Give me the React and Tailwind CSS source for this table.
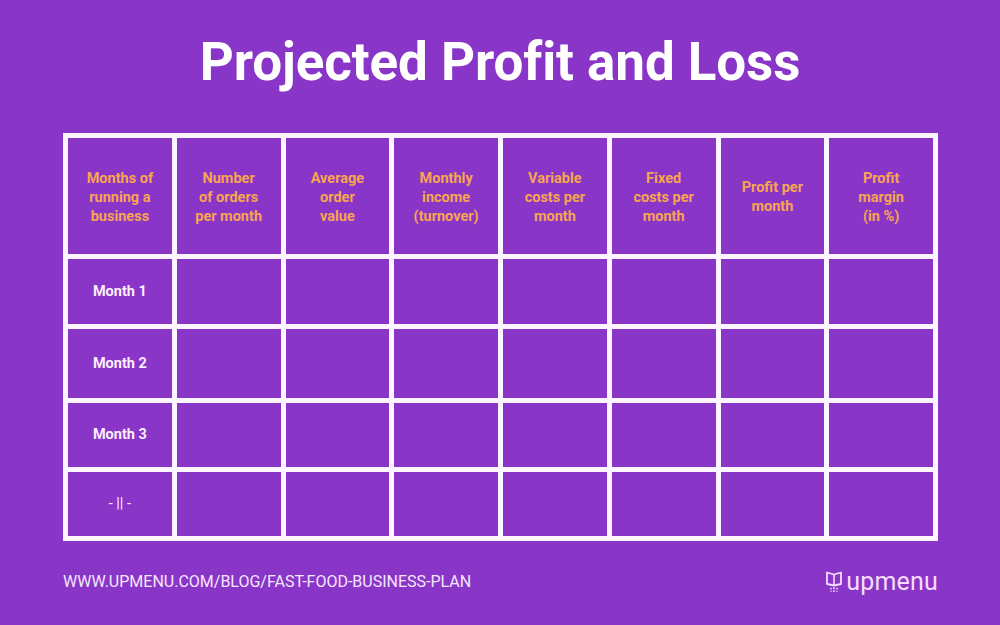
const headers = [
  ["Months of", "running a", "business"],
  ["Number", "of orders", "per month"],
  ["Average", "order", "value"],
  ["Monthly", "income", "(turnover)"],
  ["Variable", "costs per", "month"],
  ["Fixed", "costs per", "month"],
  ["Profit per", "month"],
  ["Profit", "margin", "(in %)"],
];

const rows = [
  { label: "Month 1", h: "h-[65px]" },
  { label: "Month 2", h: "h-[69px]" },
  { label: "Month 3", h: "h-[64px]" },
  { label: "- || -", h: "h-[64px]", thin: true },
];

function Logo() {
  return (
    <div className="flex items-center gap-[3px] text-[#f6dcff]">
      <svg width="18" height="23" viewBox="0 0 18 23" fill="none">
        <path
          d="M2 2.5 L9 4.5 L16 2.5 L16 14 L9 15.5 L2 14 Z"
          stroke="currentColor"
          strokeWidth="1.8"
          strokeLinejoin="round"
        />
        <path d="M9 4.5 V15.5" stroke="currentColor" strokeWidth="1.6" />
        <circle cx="9" cy="18.3" r="1" fill="currentColor" />
        <circle cx="6" cy="18.6" r="0.9" fill="currentColor" />
        <circle cx="12" cy="18.6" r="0.9" fill="currentColor" />
        <circle cx="9" cy="21.2" r="0.9" fill="currentColor" />
        <circle cx="6" cy="21.3" r="0.7" fill="currentColor" />
        <circle cx="12" cy="21.3" r="0.7" fill="currentColor" />
      </svg>
      <span className="text-[25px] leading-none tracking-[0.2px]">upmenu</span>
    </div>
  );
}

export default function App() {
  return (
    <div className="w-[1000px] h-[625px] bg-[#8935c7] flex flex-col font-['Roboto',sans-serif]">
      <h1 className="text-center text-white text-[53px] font-bold leading-none mt-[36px] tracking-[-0.1px]">
        Projected Profit and Loss
      </h1>

      <div className="ml-[63px] mt-[44px] w-[875px] bg-[#fdf5ff] p-[5px] flex flex-col gap-[5px]">
        <div className="grid grid-cols-8 gap-[5px] h-[116px]">
          {headers.map((lines, i) => (
            <div
              key={i}
              className="bg-[#8935c7] flex flex-col items-center justify-center pt-[2px] text-[#f7a550] text-[14.5px] font-bold leading-[19px] text-center"
            >
              {lines.map((l) => (
                <span key={l}>{l}</span>
              ))}
            </div>
          ))}
        </div>
        {rows.map((r) => (
          <div key={r.label} className={`grid grid-cols-8 gap-[5px] ${r.h}`}>
            <div
              className={`bg-[#8935c7] flex items-center justify-center text-[#fbeeff] text-[14.5px] ${
                r.thin ? "font-normal" : "font-bold"
              }`}
            >
              {r.label}
            </div>
            {Array.from({ length: 7 }).map((_, j) => (
              <div key={j} className="bg-[#8935c7]" />
            ))}
          </div>
        ))}
      </div>

      <div className="flex items-center justify-between ml-[63px] mr-[62px] mt-[28px]">
        <span className="text-[16px] text-[#f6e6ff]">
          WWW.UPMENU.COM/BLOG/FAST-FOOD-BUSINESS-PLAN
        </span>
        <Logo />
      </div>
    </div>
  );
}
